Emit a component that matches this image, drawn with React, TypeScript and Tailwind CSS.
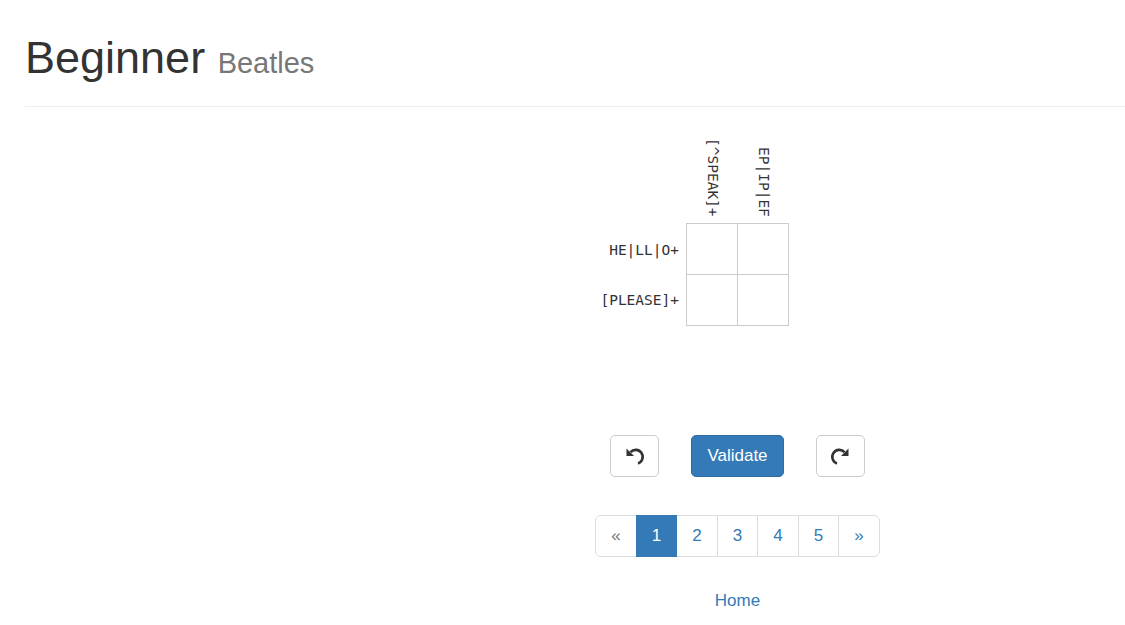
const COLS = ["[^SPEAK]+", "EP|IP|EF"];
const ROWS = ["HE|LL|O+", "[PLEASE]+"];
const PAGES = ["«", "1", "2", "3", "4", "5", "»"];

function UndoIcon({ flip = false }: { flip?: boolean }) {
  return (
    <svg
      width="20"
      height="18"
      viewBox="0 0 20 18"
      className={flip ? "-scale-x-100" : ""}
      fill="none"
    >
      <path
        d="M5.5 5.2 A7 7 0 1 1 13 16.5"
        stroke="#333"
        strokeWidth="2.6"
        strokeLinecap="butt"
      />
      <polygon points="1.5,1.5 1.5,9 9,9" fill="#333" />
    </svg>
  );
}

function Board() {
  return (
    <div className="grid grid-cols-[1fr_auto_1fr] font-['DejaVu_Sans_Mono',monospace] text-[14.5px] text-[#333]">
      {/* column clues */}
      <div />
      <div className="flex h-[116px] pl-px">
        {COLS.map((c) => (
          <div key={c} className="flex w-[51px] items-end justify-center pb-[6px]">
            <span className="leading-none [writing-mode:vertical-rl]">{c}</span>
          </div>
        ))}
      </div>
      <div />

      {/* row clues + cells */}
      <div className="flex flex-col items-end pt-[3px] pr-[7px]">
        {ROWS.map((r) => (
          <div key={r} className="flex h-[50px] items-center">
            {r}
          </div>
        ))}
      </div>
      <div className="grid grid-cols-[50px_50px] self-start gap-px bg-[#ccc] p-px">
        {ROWS.flatMap((r) =>
          COLS.map((c) => <div key={r + c} className="h-[50px] bg-white" />)
        )}
      </div>
      <div />
    </div>
  );
}

export default function App() {
  return (
    <div className="min-h-screen bg-white pl-[25px] pt-[33px] font-['Liberation_Sans',Arial,sans-serif] text-[#333]">
      <h1 className="border-b border-[#eee] pb-[23px] text-[45px] leading-[1.1] font-normal">
        Beginner <small className="text-[29px] text-[#777]">Beatles</small>
      </h1>

      <div className="flex">
        <div className="w-[325px] shrink-0" />
        <div className="flex flex-1 flex-col items-center">
          <Board />

          <div className="mt-[109px] flex gap-8">
            <button
              type="button"
              className="flex h-[42px] w-[49px] items-center justify-center rounded-[5px] border border-[#ccc] bg-white"
            >
              <UndoIcon />
            </button>
            <button
              type="button"
              className="h-[42px] rounded-[5px] border border-[#2e6da4] bg-[#337ab7] px-[15px] text-[17px] text-white"
            >
              Validate
            </button>
            <button
              type="button"
              className="flex h-[42px] w-[49px] items-center justify-center rounded-[5px] border border-[#ccc] bg-white"
            >
              <UndoIcon flip />
            </button>
          </div>

          <ul className="mt-[38px] flex">
            {PAGES.map((p, i) => (
              <li
                key={p}
                className={
                  "flex h-[42px] w-[41.5px] items-center justify-center border text-[17px] " +
                  (i > 0 ? "-ml-px " : "") +
                  (i === 0 ? "rounded-l-[6px] " : "") +
                  (i === PAGES.length - 1 ? "rounded-r-[6px] " : "") +
                  (p === "1"
                    ? "z-10 border-[#337ab7] bg-[#337ab7] text-white"
                    : i === 0
                      ? "border-[#ddd] bg-white text-[#777]"
                      : "border-[#ddd] bg-white text-[#337ab7]")
                }
              >
                {p}
              </li>
            ))}
          </ul>

          <a href="#" className="mt-[32px] text-[17px] leading-[24px] text-[#337ab7]">
            Home
          </a>
        </div>
      </div>
    </div>
  );
}
